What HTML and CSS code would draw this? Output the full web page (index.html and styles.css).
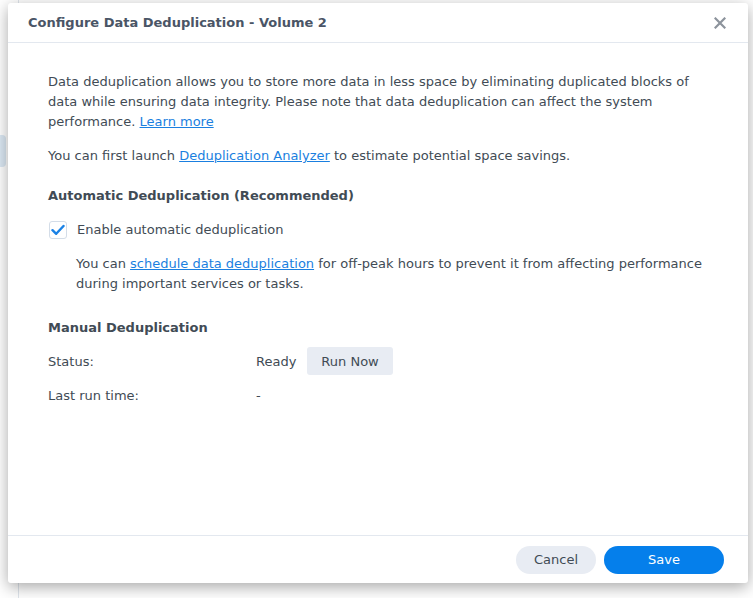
FILE: index.html
```html
<!DOCTYPE html>
<html>
<head>
<meta charset="utf-8">
<link rel="stylesheet" href="styles.css">
</head>
<body>
<div class="page">
  <div class="bg-tab"></div>
  <div class="dialog">
    <div class="header">
      <div class="title">Configure Data Deduplication - Volume 2</div>
      <svg class="close" width="12" height="12" viewBox="0 0 12 12"><path d="M1.5 1.5 L10.5 10.5 M10.5 1.5 L1.5 10.5" stroke="#8c939c" stroke-width="2.2" stroke-linecap="square"/></svg>
    </div>
    <div class="body">
      <p class="para">Data deduplication allows you to store more data in less space by eliminating duplicated blocks of data while ensuring data integrity. Please note that data deduplication can affect the system performance. <a class="link">Learn more</a></p>
      <p class="para p2">You can first launch <a class="link">Deduplication Analyzer</a> to estimate potential space savings.</p>
      <div class="section-title">Automatic Deduplication (Recommended)</div>
      <div class="check-row">
        <span class="checkbox"><svg width="14" height="12" viewBox="0 0 14 12"><path d="M1.5 6.2 L5.2 9.8 L12.5 2" fill="none" stroke="#1a82e6" stroke-width="2.4" stroke-linecap="round" stroke-linejoin="round"/></svg></span>
        <span>Enable automatic deduplication</span>
      </div>
      <p class="para indent">You can <a class="link">schedule data deduplication</a> for off-peak hours to prevent it from affecting performance during important services or tasks.</p>
      <div class="section-title s2">Manual Deduplication</div>
      <div class="field-row">
        <span class="label">Status:</span>
        <span class="value">Ready</span>
        <button class="btn-gray">Run Now</button>
      </div>
      <div class="field-row r2">
        <span class="label">Last run time:</span>
        <span class="value">-</span>
      </div>
    </div>
    <div class="footer">
      <button class="btn-cancel">Cancel</button>
      <button class="btn-save">Save</button>
    </div>
  </div>
</div>
</body>
</html>
```
FILE: styles.css
```css
html, body {
  margin: 0;
  padding: 0;
  background: #ffffff;
}
body {
  width: 753px;
  height: 598px;
  overflow: hidden;
  font-family: "DejaVu Sans", Verdana, sans-serif;
  font-size: 13px;
  color: #414b55;
}
.page {
  position: relative;
  width: 753px;
  height: 598px;
  background: linear-gradient(to right, transparent 18px, #dfe5ec 18px, #dfe5ec 19px, transparent 19px);
  padding-top: 3px;
  box-sizing: border-box;
}
.bg-tab {
  position: absolute;
  left: -6px;
  top: 135px;
  width: 12px;
  height: 32px;
  border-radius: 4px;
  background: #dbe8f3;
}
.dialog {
  position: relative;
  margin-left: 8px;
  width: 740px;
  height: 580px;
  background: #fff;
  border-radius: 3px;
  box-shadow: 0 4px 16px rgba(0, 0, 0, 0.35);
  display: flex;
  flex-direction: column;
}
.header {
  height: 39px;
  border-bottom: 1px solid #e3e8ef;
  display: flex;
  align-items: center;
  justify-content: space-between;
  padding: 0 20px 0 20px;
}
.title {
  font-weight: bold;
  font-size: 13px;
  color: #4a5566;
  padding-bottom: 1px;
}
.close {
  margin-right: 2px;
}
.body {
  flex: 1;
  padding: 29px 40px 0 40px;
}
.para {
  margin: 0;
  line-height: 20px;
}
.p2 {
  margin-top: 14px;
}
.link {
  color: #1a7fe0;
  text-decoration: underline;
  cursor: pointer;
}
.section-title {
  font-weight: bold;
  margin-top: 20px;
  line-height: 20px;
  color: #414b55;
}
.s2 {
  margin-top: 24px;
}
.check-row {
  display: flex;
  align-items: center;
  gap: 10px;
  margin-top: 14px;
  line-height: 20px;
}
.checkbox {
  width: 16px;
  height: 16px;
  border: 1px solid #d4dde8;
  border-radius: 3px;
  display: flex;
  align-items: center;
  justify-content: center;
  margin-left: 1px;
}
.indent {
  margin-left: 28px;
  margin-top: 14px;
}
.field-row {
  display: flex;
  align-items: center;
  margin-top: 9px;
  height: 28px;
}
.r2 {
  margin-top: 6px;
}
.label {
  width: 208px;
}
.value {
  margin-right: 11px;
}
.btn-gray {
  height: 28px;
  padding: 0 14px;
  border: none;
  border-radius: 3px;
  background: #e8ecf3;
  color: #414b55;
  font-family: inherit;
  font-size: 13px;
}
.footer {
  height: 47px;
  border-top: 1px solid #e3e8ef;
  display: flex;
  justify-content: flex-end;
  align-items: center;
  gap: 8px;
  padding: 0 24px 0 0;
}
.btn-cancel, .btn-save {
  height: 28px;
  border: none;
  border-radius: 14px;
  font-family: inherit;
  font-size: 13px;
}
.btn-cancel {
  width: 80px;
  background: #e8ecf3;
  color: #414b55;
}
.btn-save {
  width: 120px;
  background: #057feb;
  color: #fff;
}
```
